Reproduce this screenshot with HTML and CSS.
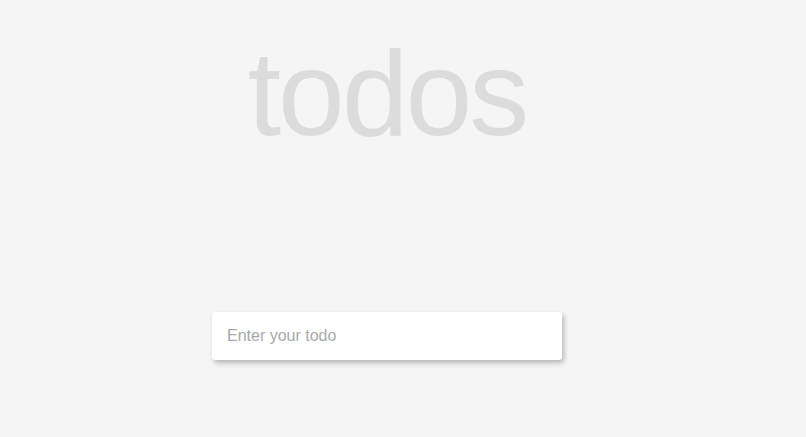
FILE: index.html
```html
<!DOCTYPE html>
<html>
<head>
<meta charset="utf-8">
<link rel="stylesheet" href="styles.css">
</head>
<body>
<main class="app">
  <h1 class="title">todos</h1>
  <input class="new-todo" type="text" placeholder="Enter your todo">
</main>
</body>
</html>
```
FILE: styles.css
```css
html, body {
  margin: 0;
  padding: 0;
  background: #f5f5f5;
  height: 100%;
}
.app {
  width: 774px;
  display: flex;
  flex-direction: column;
  align-items: center;
  font-family: "Liberation Sans", Arial, sans-serif;
}
.title {
  margin: 23px 0 0 0;
  font-size: 120px;
  font-weight: 400;
  line-height: 140px;
  letter-spacing: -3px;
  color: #dcdcdc;
}
.new-todo {
  margin-top: 149px;
  width: 350px;
  height: 48px;
  box-sizing: border-box;
  border: none;
  border-radius: 3px;
  background: #fff;
  box-shadow: 2px 3px 5px rgba(0,0,0,0.25);
  padding: 0 15px;
  font-family: "Liberation Sans", Arial, sans-serif;
  font-size: 16px;
  color: #444;
  outline: none;
}
.new-todo::placeholder {
  color: #a9a9a9;
}
```
